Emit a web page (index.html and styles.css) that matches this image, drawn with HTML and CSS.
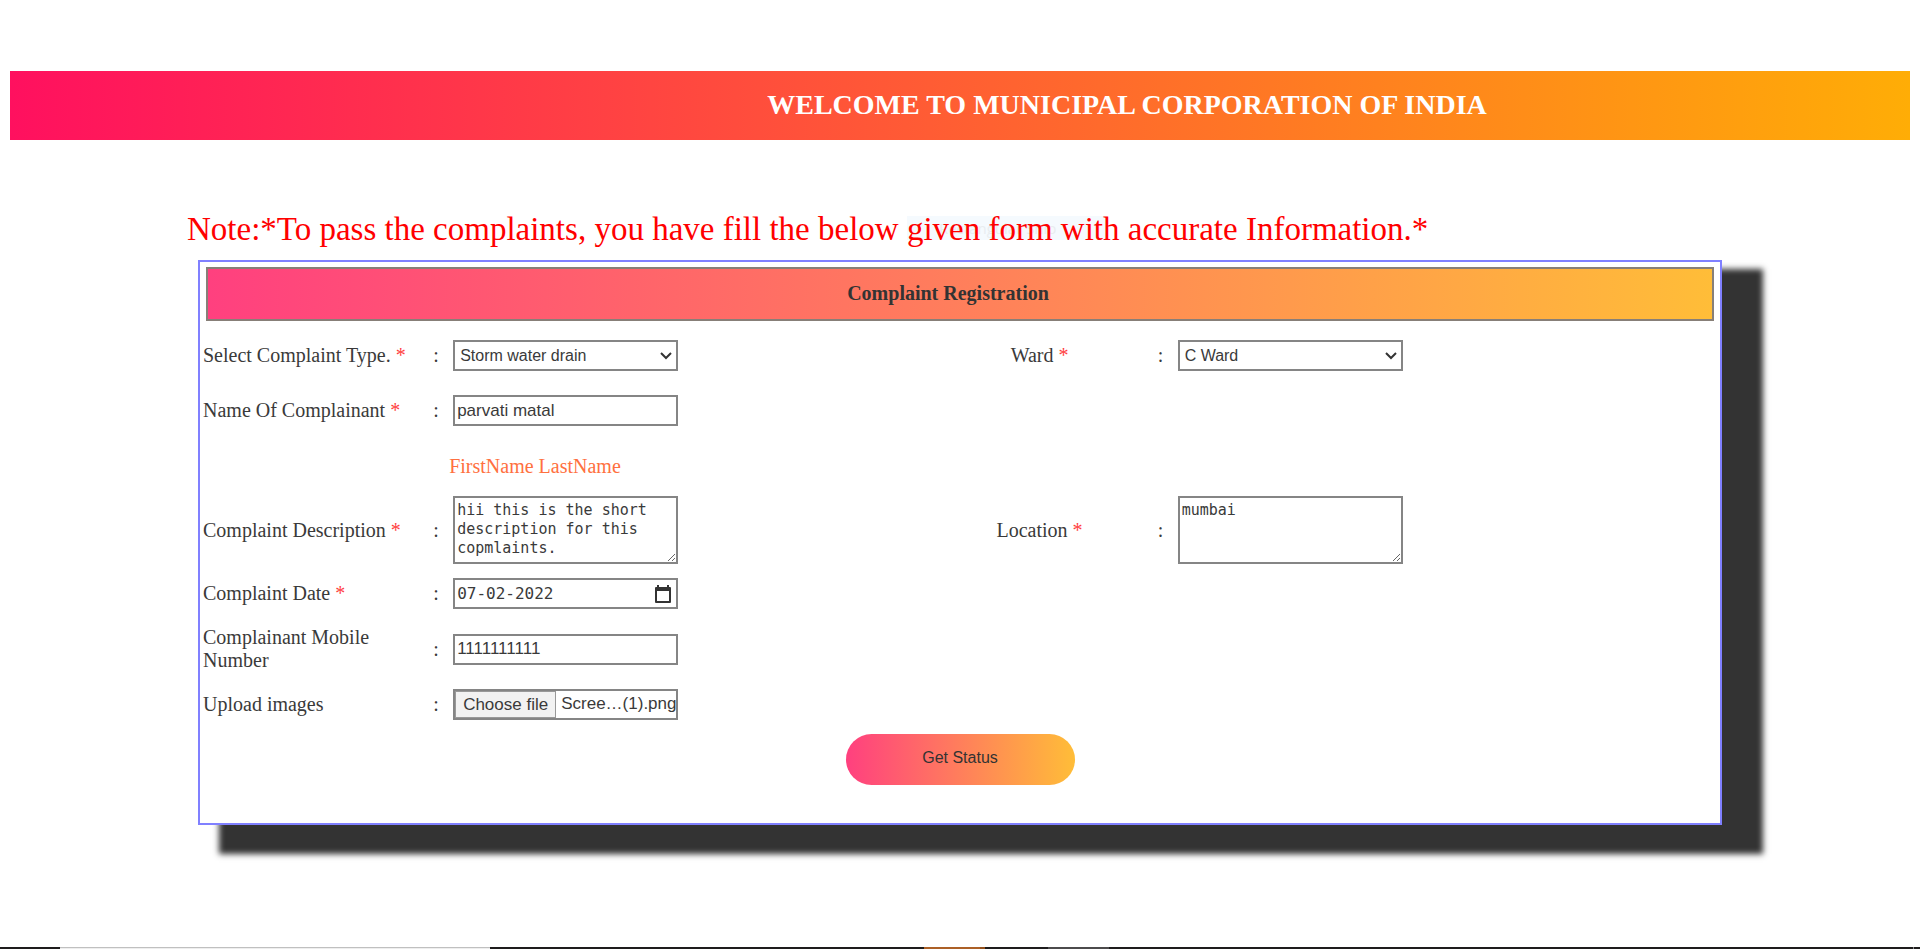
FILE: index.html
```html
<!DOCTYPE html>
<html lang="en">
<head>
<meta charset="utf-8">
<title>Complaint Registration</title>
<link rel="stylesheet" href="styles.css">
</head>
<body>
<main class="page">
  <header class="banner"><h1 class="banner-title">WELCOME TO MUNICIPAL CORPORATION OF INDIA</h1></header>
  <p class="note">Note:*To pass the complaints, you have fill the below <span class="tip"><span class="tip-text" aria-hidden="true">Rectangular Snip</span></span>given form with accurate Information.*</p>
  <form class="card">
    <h2 class="card-title">Complaint Registration</h2>
    <div class="fields">
      <label for="type">Select Complaint Type. <span class="req">*</span></label><span>:</span>
      <select id="type" class="control select"><option>Storm water drain</option></select>
      <label for="ward" class="mid">Ward <span class="req">*</span></label><span>:</span>
      <select id="ward" class="control select"><option>C Ward</option></select>

      <label for="name" class="first">Name Of Complainant <span class="req">*</span></label><span>:</span>
      <input id="name" class="control" type="text" value="parvati matal">

      <span class="hint">FirstName LastName</span>

      <label for="desc" class="first">Complaint Description <span class="req">*</span></label><span>:</span>
      <textarea id="desc" class="control area">hii this is the short description for this copmlaints.</textarea>
      <label for="loc" class="mid">Location <span class="req">*</span></label><span>:</span>
      <textarea id="loc" class="control area">mumbai</textarea>

      <label for="date" class="first">Complaint Date <span class="req">*</span></label><span>:</span>
      <div class="control date">
        <input id="date" class="date-input" type="text" value="07-02-2022">
        <button class="date-button" type="button" aria-label="Open calendar">
          <svg width="16" height="18" viewBox="0 0 16 18"><path fill="#333" fill-rule="evenodd" d="M2 0h2v2h8V0h2v2h1q1 0 1 1v14q0 1-1 1H1q-1 0-1-1V3q0-1 1-1h1zM2 6v10h12V6z"/></svg>
        </button>
      </div>

      <label for="mobile" class="first">Complainant Mobile Number</label><span>:</span>
      <input id="mobile" class="control" type="text" value="1111111111">

      <label for="upload" class="first">Upload images</label><span>:</span>
      <label class="control file"><input id="upload" class="file-input" type="file"><span class="file-button">Choose file</span><span class="file-name">Scree…(1).png</span></label>
    </div>
    <button class="submit" type="button">Get Status</button>
  </form>
</main>
<footer class="strip">
  <span class="seg-search"></span><span class="seg-active"></span><span class="seg-open"></span><span class="seg-end"></span>
</footer>
</body>
</html>
```
FILE: styles.css
```css
* { box-sizing: border-box; }
body {
  margin: 0;
  min-height: 100vh;
  display: flex;
  flex-direction: column;
  justify-content: space-between;
  background: #fff;
  color: #3a3a3a;
  font: 20px/23px "Liberation Serif", serif;
}
.page { padding: 71px 10px 0; }
.banner {
  padding: 17px 0 19px 334px;
  background: linear-gradient(to right, #ff105f, #ffad06);
  text-align: center;
}
.banner-title { margin: 0; color: #fff; font-size: 28px; line-height: 33px; }
.note { margin: 69px 0 11px 177px; color: #f00; font-size: 33px; line-height: 40px; }
.tip { position: relative; }
.tip-text {
  position: absolute;
  z-index: -1;
  left: 0;
  bottom: 7px;
  width: 200px;
  padding-left: 32px;
  background: #f5fafe;
  color: #e9edf0;
  font: 15px/24px "Open Sans", sans-serif;
}
.card {
  box-sizing: content-box;
  width: 80%;
  margin: 0 auto;
  padding-bottom: 38px;
  border: 2px solid #8080ff;
  background: #fff;
  box-shadow: 31px 19px 6px 10px #333;
}
.card-title {
  margin: 5px 6px 19px;
  padding: 14px 24px 15px 0;
  border: 2px solid #877f78;
  background: linear-gradient(to right, #ff407f, #ffbd38);
  color: #333;
  font-size: 20px;
  line-height: 21px;
  text-align: center;
}
.fields {
  display: grid;
  grid-template-columns: 230fr 16px 472fr 236fr 16px 544fr;
  grid-template-rows: 31px minmax(51px, auto) minmax(32px, auto) auto 31px minmax(52px, auto) 31px;
  row-gap: 14px;
  align-items: center;
  padding: 0 2px 0 3px;
}
.first { grid-column: 1; }
.mid { text-align: center; }
.req { color: #ff4040; }
.hint { grid-column: 3; color: #ff7040; }
.control {
  width: 225px;
  height: 31px;
  margin: 0 4px;
  padding: 0 2px;
  border: 2px solid #858585;
  border-radius: 0;
  outline: 0;
  background: #fff;
  color: #3a3a3a;
  font: 17px/19px "Liberation Sans", sans-serif;
}
.select {
  appearance: none;
  padding: 0 20px 0 5px;
  background: #fff url("data:image/svg+xml,%3Csvg xmlns='http://www.w3.org/2000/svg' width='12' height='8'%3E%3Cpath d='M1 1l5 5 5-5' fill='none' stroke='%23333' stroke-width='2'/%3E%3C/svg%3E") no-repeat right 4px center;
  font-size: 16px;
}
.area { height: 68px; padding: 3px 2px; font: 15px/19px "DejaVu Sans Mono", monospace; resize: both; }
.date { display: flex; align-items: center; justify-content: space-between; padding-right: 5px; }
.date-input { width: 120px; padding: 0; border: 0; background: none; color: #3a3a3a; font: 16px/19px "DejaVu Sans Mono", monospace; }
.date-button { display: flex; padding: 0; border: 0; background: none; }
.file { display: flex; padding: 0; overflow: hidden; white-space: nowrap; }
.file-input { position: absolute; width: 1px; height: 1px; opacity: 0; }
.file-button { padding: 3px 7px; border: 1px solid #999; background: #f2f2f2; }
.file-name { padding: 3px 0 0 5px; }
.submit {
  display: block;
  width: 229px;
  height: 51px;
  margin: 14px auto 0;
  padding: 0 0 4px;
  border: 0;
  border-radius: 26px;
  background: linear-gradient(to right, #ff407f, #ffbd38);
  color: #333;
  font: 16px/19px "Liberation Sans", sans-serif;
}
.strip {
  display: grid;
  grid-template-columns: 60fr 430fr 434fr 61fr 63fr 61fr 804fr 1px 6fr;
  height: 2px;
  background: #1e1c1d;
}
.seg-search { grid-column: 2; border-top: 1px solid #c0c0c0; background: #eee; }
.seg-active { grid-column: 4; border-right: 5px solid #94501c; background: #ac6026; }
.seg-open { grid-column: 6; background: #4c4b4c; }
.seg-end { grid-column: 8; background: #888; }
```
